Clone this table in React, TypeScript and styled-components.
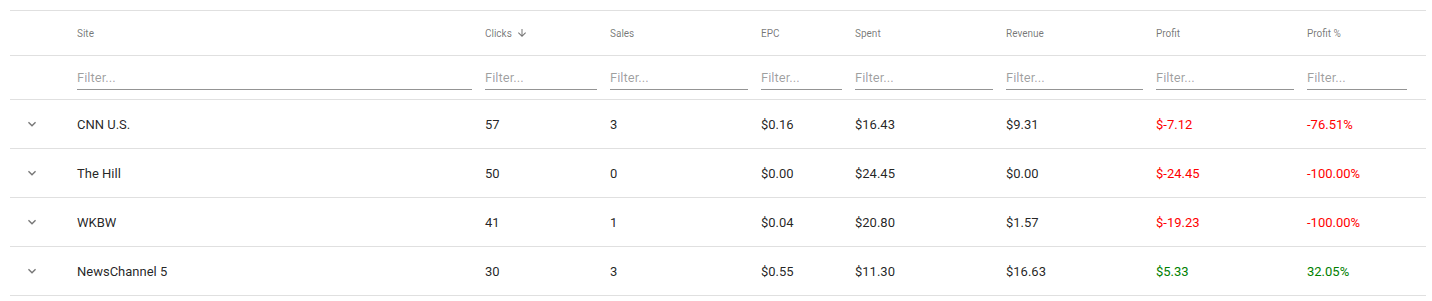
import React from "react";
import styled, { createGlobalStyle } from "styled-components";

const GlobalStyle = createGlobalStyle`
  html, body { margin: 0; padding: 0; background: #ffffff; }
  body { font-family: Roboto, "Liberation Sans", Arial, sans-serif; }
  * { box-sizing: border-box; }
`;

const Page = styled.div`
  padding: 10px 6px 0 10px;
`;

const Table = styled.div`
  width: 1416px;
  border-top: 1px solid #e0e0e0;
`;

const COLUMNS = "67px 408px 125px 151px 94px 151px 150px 151px 119px";

const Row = styled.div<{ $height: number }>`
  display: grid;
  grid-template-columns: ${COLUMNS};
  height: ${(p) => p.$height}px;
  border-bottom: 1px solid #e0e0e0;
`;

const HeadCell = styled.div`
  display: flex;
  align-items: center;
  padding-right: 13px;
  font-size: 10px;
  color: rgba(0, 0, 0, 0.54);
  white-space: nowrap;
  &:last-child { padding-right: 19px; }
`;

const FilterCell = styled.div`
  padding: 14px 13px 0 0;
  &:last-child { padding-right: 19px; }
`;

const FilterInput = styled.input`
  display: block;
  width: 100%;
  margin: 0;
  border: none;
  border-bottom: 1px solid rgba(0, 0, 0, 0.42);
  outline: none;
  background: transparent;
  padding: 0 0 4px 0;
  font-family: Roboto, "Liberation Sans", Arial, sans-serif;
  font-size: 13px;
  line-height: 15px;
  height: 20px;
  color: rgba(0, 0, 0, 0.87);
  &::placeholder { color: rgba(0, 0, 0, 0.38); opacity: 1; }
`;

const Cell = styled.div<{ $tone?: "neg" | "pos" }>`
  display: flex;
  align-items: center;
  padding-right: 13px;
  font-size: 13px;
  color: ${(p) =>
    p.$tone === "neg" ? "#ff0000" : p.$tone === "pos" ? "#008000" : "rgba(0, 0, 0, 0.87)"};
  white-space: nowrap;
  &:last-child { padding-right: 19px; }
`;

const ExpandCell = styled.div`
  display: flex;
  align-items: center;
  padding-left: 14px;
`;

const ExpandButton = styled.button`
  display: flex;
  align-items: center;
  justify-content: center;
  width: 16px;
  height: 16px;
  padding: 0;
  border: none;
  background: transparent;
  color: rgba(0, 0, 0, 0.54);
  cursor: pointer;
`;

const SortIcon = styled.svg`
  width: 12px;
  height: 12px;
  margin-left: 4px;
  fill: rgba(0, 0, 0, 0.54);
`;

const Chevron = () => (
  <svg width="16" height="16" viewBox="0 0 24 24" fill="currentColor">
    <path d="M16.59 8.59L12 13.17 7.41 8.59 6 10l6 6 6-6z" />
  </svg>
);

type Tone = "neg" | "pos" | undefined;

interface Site {
  site: string;
  clicks: number;
  sales: number;
  epc: string;
  spent: string;
  revenue: string;
  profit: string;
  pct: string;
  tone: Tone;
}

const rows: Site[] = [
  { site: "CNN U.S.", clicks: 57, sales: 3, epc: "$0.16", spent: "$16.43", revenue: "$9.31", profit: "$-7.12", pct: "-76.51%", tone: "neg" },
  { site: "The Hill", clicks: 50, sales: 0, epc: "$0.00", spent: "$24.45", revenue: "$0.00", profit: "$-24.45", pct: "-100.00%", tone: "neg" },
  { site: "WKBW", clicks: 41, sales: 1, epc: "$0.04", spent: "$20.80", revenue: "$1.57", profit: "$-19.23", pct: "-100.00%", tone: "neg" },
  { site: "NewsChannel 5", clicks: 30, sales: 3, epc: "$0.55", spent: "$11.30", revenue: "$16.63", profit: "$5.33", pct: "32.05%", tone: "pos" },
];

const headers = ["Site", "Clicks", "Sales", "EPC", "Spent", "Revenue", "Profit", "Profit %"];

export default function App() {
  return (
    <Page>
      <GlobalStyle />
      <Table>
        <Row $height={45}>
          <HeadCell />
          {headers.map((h) => (
            <HeadCell key={h}>
              {h}
              {h === "Clicks" && (
                <SortIcon viewBox="0 0 24 24">
                  <path d="M20 12l-1.41-1.41L13 16.17V4h-2v12.17l-5.58-5.59L4 12l8 8 8-8z" />
                </SortIcon>
              )}
            </HeadCell>
          ))}
        </Row>
        <Row $height={44}>
          <FilterCell />
          {headers.map((h) => (
            <FilterCell key={h}>
              <FilterInput placeholder="Filter..." />
            </FilterCell>
          ))}
        </Row>
        {rows.map((r) => (
          <Row $height={49} key={r.site}>
            <ExpandCell>
              <ExpandButton aria-label="expand">
                <Chevron />
              </ExpandButton>
            </ExpandCell>
            <Cell>{r.site}</Cell>
            <Cell>{r.clicks}</Cell>
            <Cell>{r.sales}</Cell>
            <Cell>{r.epc}</Cell>
            <Cell>{r.spent}</Cell>
            <Cell>{r.revenue}</Cell>
            <Cell $tone={r.tone}>{r.profit}</Cell>
            <Cell $tone={r.tone}>{r.pct}</Cell>
          </Row>
        ))}
      </Table>
    </Page>
  );
}
